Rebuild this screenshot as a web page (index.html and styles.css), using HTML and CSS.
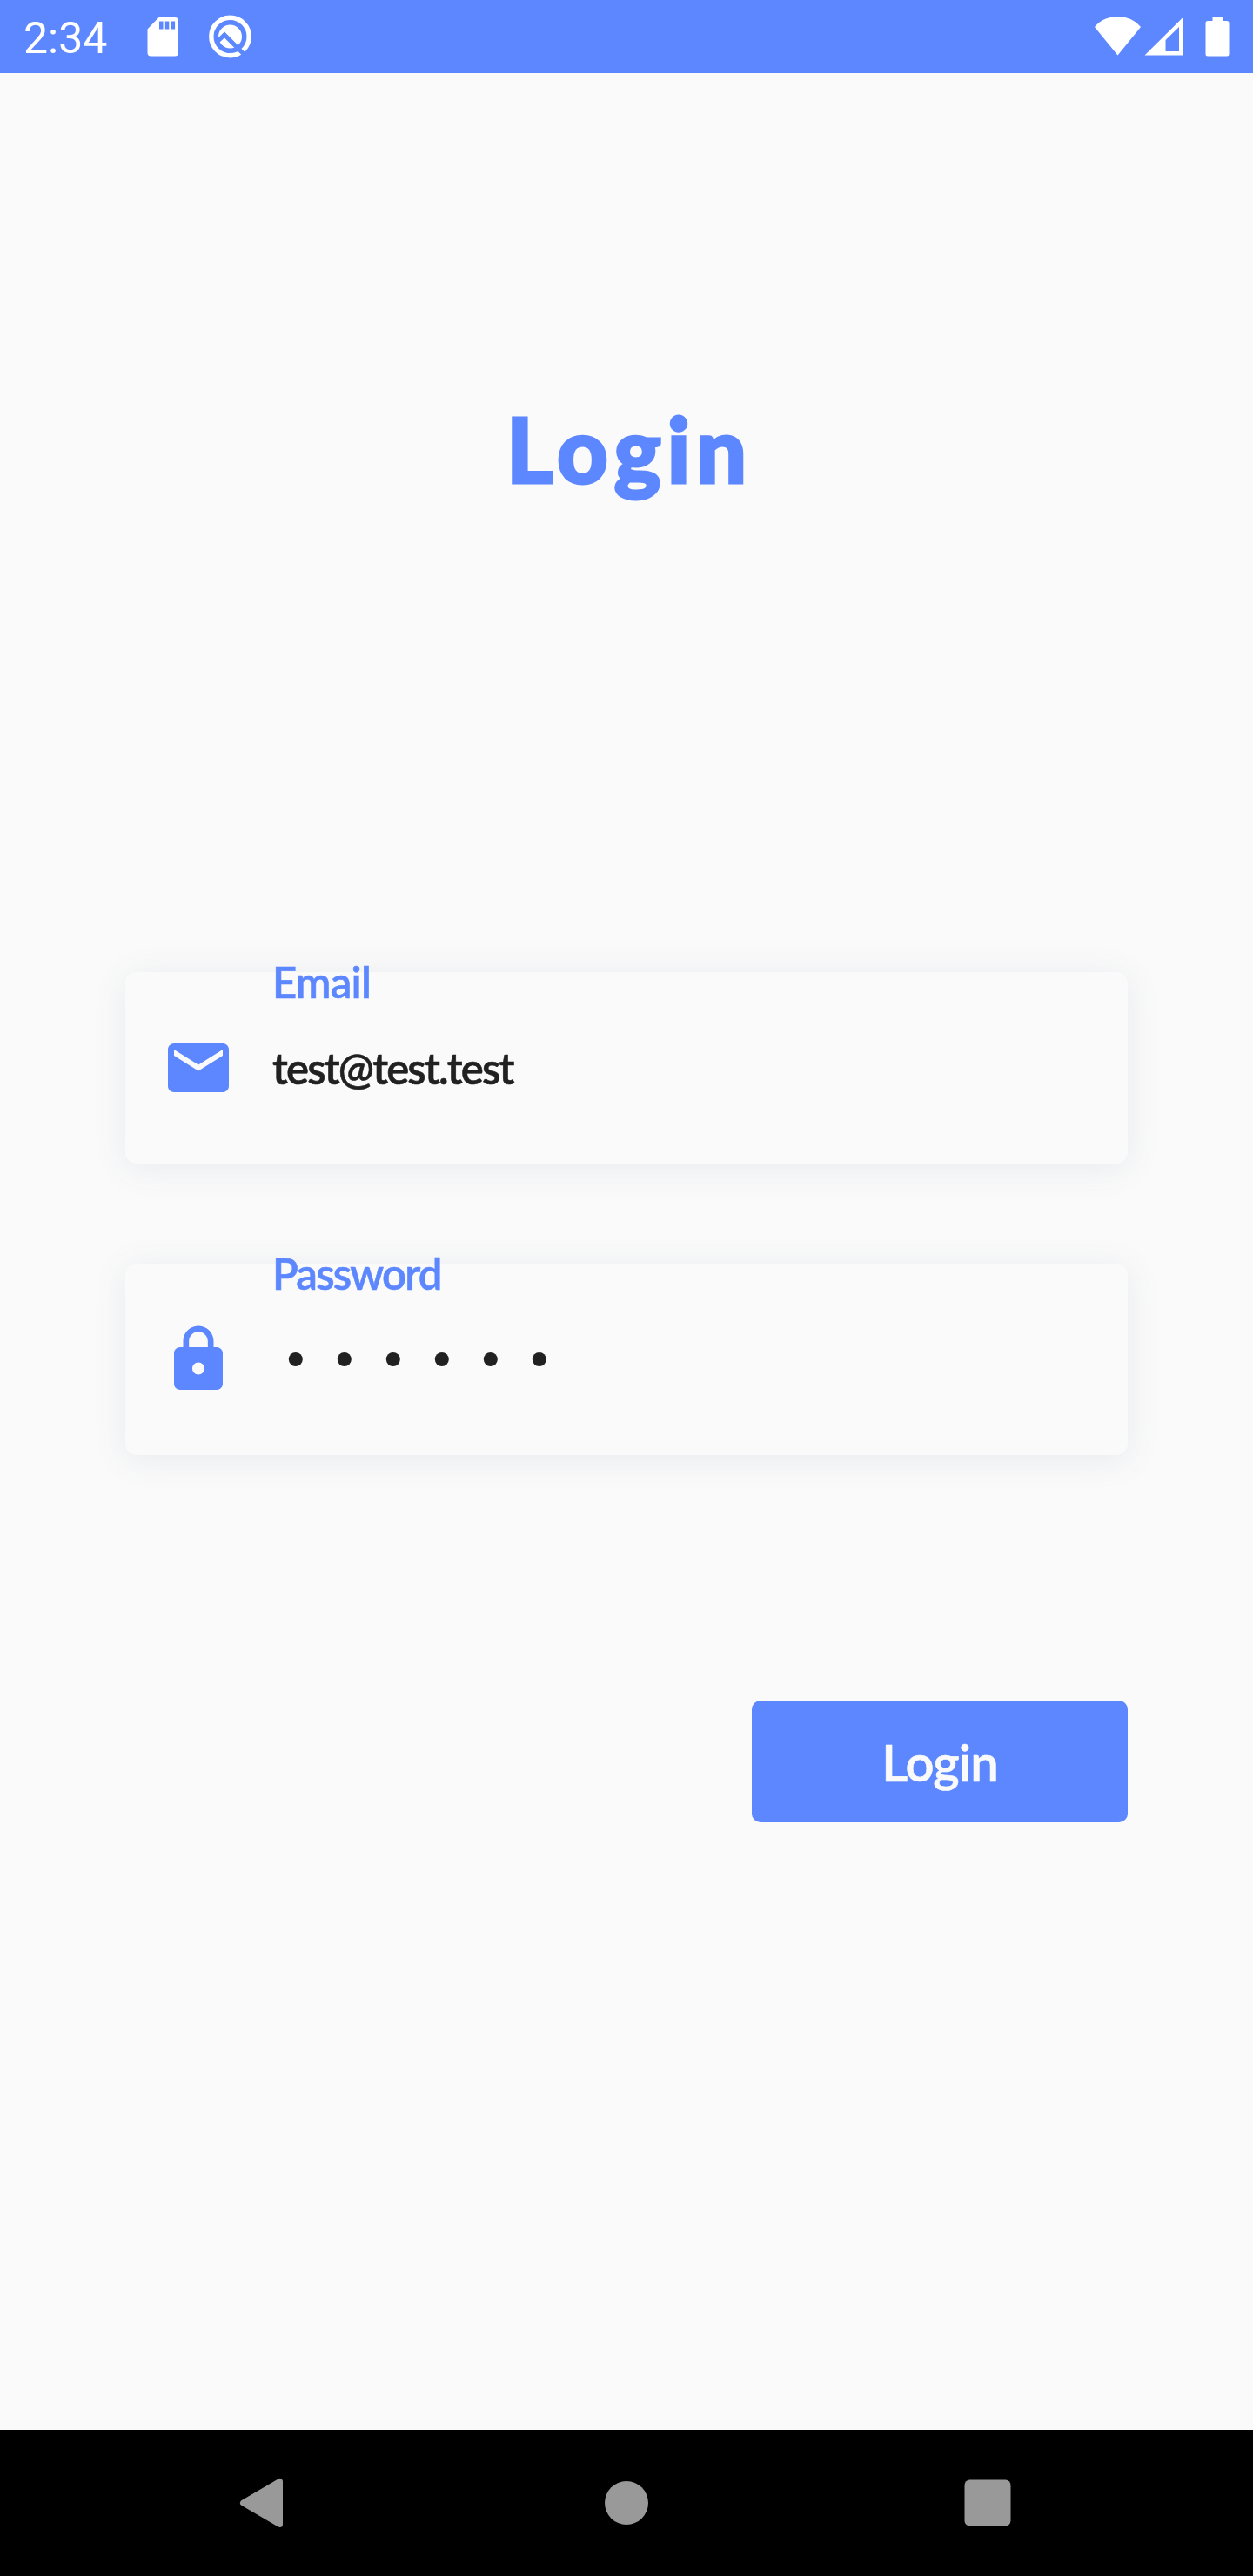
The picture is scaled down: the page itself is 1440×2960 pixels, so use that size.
FILE: index.html
```html
<!DOCTYPE html>
<html lang="en">
<head>
<meta charset="utf-8">
<title>Login</title>
<link rel="stylesheet" href="styles.css">
</head>
<body>
<div class="screen">
  <header class="status-bar">
    <span class="clock">2:34</span>
    <svg class="icon-left" width="140" height="84" viewBox="0 0 140 84" fill="#fff">
      <path fill-rule="evenodd" d="M26.500 20H45q4 0 4 4v36.500q0 4-4 4H17.500q-4 0-4-4V33.500zM27 24.500v9h4.500v-9zm6.800 0v9h4.500v-9zm6.800 0v9h4.500v-9z"/>
      <circle cx="108.500" cy="42" r="13.500"/>
      <circle cx="108.500" cy="42" r="21.700" fill="none" stroke="#fff" stroke-width="5.400"/>
      <path d="M94 47.500L102 40L127 65" fill="none" stroke="#5c87ff" stroke-width="5"/>
    </svg>
    <svg class="icon-right" width="160" height="84" viewBox="0 0 160 84" fill="#fff">
      <path d="M4 31Q14 19 30.500 19T57 31L30.500 63.500z"/>
      <path fill-rule="evenodd" d="M61.500 63.500L106 19.500V63.500zM85.500 46V59H101V31z"/>
      <path d="M139.500 19h11.500v5H156q2.500 0 2.500 2.500V62q0 2.500-2.500 2.500H134q-2.500 0-2.500-2.500V26.500q0-2.500 2.500-2.500h5.500z"/>
    </svg>
  </header>
  <main class="content">
    <h1 class="title">Login</h1>
    <form class="form">
      <label class="field">
        <svg class="field-icon" viewBox="0 0 24 24"><path d="M20 4H4c-1.100 0-2 .9-2 2v12c0 1.100.9 2 2 2h16c1.100 0 2-.9 2-2V6c0-1.100-.9-2-2-2zm0 4l-8 5-8-5V6l8 5 8-5v2z"/></svg>
        <span class="field-text">
          <span class="field-label email-label">Email</span>
          <span class="field-value">test@test.test</span>
        </span>
      </label>
      <label class="field">
        <svg class="field-icon" viewBox="0 0 24 24"><path d="M18 8h-1V6c0-2.760-2.240-5-5-5S7 3.240 7 6v2H6c-1.100 0-2 .9-2 2v10c0 1.100.9 2 2 2h12c1.100 0 2-.9 2-2V10c0-1.100-.9-2-2-2zm-6 9c-1.100 0-2-.9-2-2s.9-2 2-2 2 .9 2 2-.9 2-2 2zm3.100-9H8.900V6c0-1.710 1.390-3.100 3.100-3.100s3.100 1.390 3.100 3.100v2z"/></svg>
        <span class="field-text">
          <span class="field-label">Password</span>
          <span class="field-value dots">••••••</span>
        </span>
      </label>
      <button class="submit" type="button">Login</button>
    </form>
  </main>
  <nav class="nav-bar">
    <svg class="nav-icon" viewBox="0 0 98 98"><path d="M66.500 24.500V73.500L24.500 49z" transform="translate(-1 0)"/></svg>
    <svg class="nav-icon" viewBox="0 0 98 98"><circle cx="49" cy="49" r="25"/></svg>
    <svg class="nav-icon" viewBox="0 0 98 98"><rect x="22.500" y="22.500" width="53" height="53" rx="6"/></svg>
  </nav>
</div>
</body>
</html>
```
FILE: styles.css
```css
* { box-sizing: border-box; }
body { margin: 0; background: #fafafa; font-family: Lato, "Open Sans", sans-serif; }
.screen { width: 1440px; height: 2960px; display: flex; flex-direction: column; }
.status-bar { height: 84px; flex: none; background: #5c87ff; color: #fff; display: flex; align-items: center; padding: 0 26px 0 27px; }
.clock { width: 129px; font: 400 50px/84px Roboto, sans-serif; padding-top: 3px; }
.icon-right { margin-left: auto; }
.content { flex: 1; padding: 0 144px; }
.title { margin: 366px 0 0; height: 130px; padding-left: 7px; font-size: 102px; line-height: 131px; font-weight: 900; text-align: center; color: #5c87ff; letter-spacing: 7px; -webkit-text-stroke: 3px #5c87ff; }
.form { display: flex; flex-direction: column; padding-top: 537px; }
.field { height: 220px; margin-bottom: 115px; display: flex; align-items: center; padding-left: 42px; border-radius: 13px; background: #fafafa; box-shadow: 0 5px 38px rgba(80, 100, 140, 0.1); }
.field-icon { width: 84px; height: 84px; fill: #5c87ff; }
.field-text { align-self: flex-start; margin-left: 43px; display: flex; flex-direction: column; font-weight: 600; font-size: 49px; white-space: nowrap; letter-spacing: -1.800px; -webkit-text-stroke: 0.600px currentColor; }
.field-label { height: 60px; line-height: 60px; margin-top: -19px; color: #5c87ff; }
.email-label { letter-spacing: -0.800px; }
.field-value { height: 60px; line-height: 60px; margin-top: 39px; color: #212121; }
.dots { font-family: "Liberation Sans", sans-serif; font-size: 56px; letter-spacing: 36.400px; padding-left: 17px; margin-top: 38px; -webkit-text-stroke: 0; }
.submit { align-self: flex-end; width: 432px; height: 140px; margin-top: 167px; padding: 2px 0 0; border: 0; border-radius: 10px; background: #5c87ff; color: #fafafa; font: 600 58px/138px Lato, sans-serif; letter-spacing: -1px; -webkit-text-stroke: 0.600px currentColor; }
.nav-bar { height: 168px; flex: none; background: #000; display: flex; justify-content: center; align-items: center; gap: 317px; }
.nav-icon { width: 98px; height: 98px; fill: #999; }
.nav-icon path { stroke: #999; stroke-width: 7px; stroke-linejoin: round; }
```
